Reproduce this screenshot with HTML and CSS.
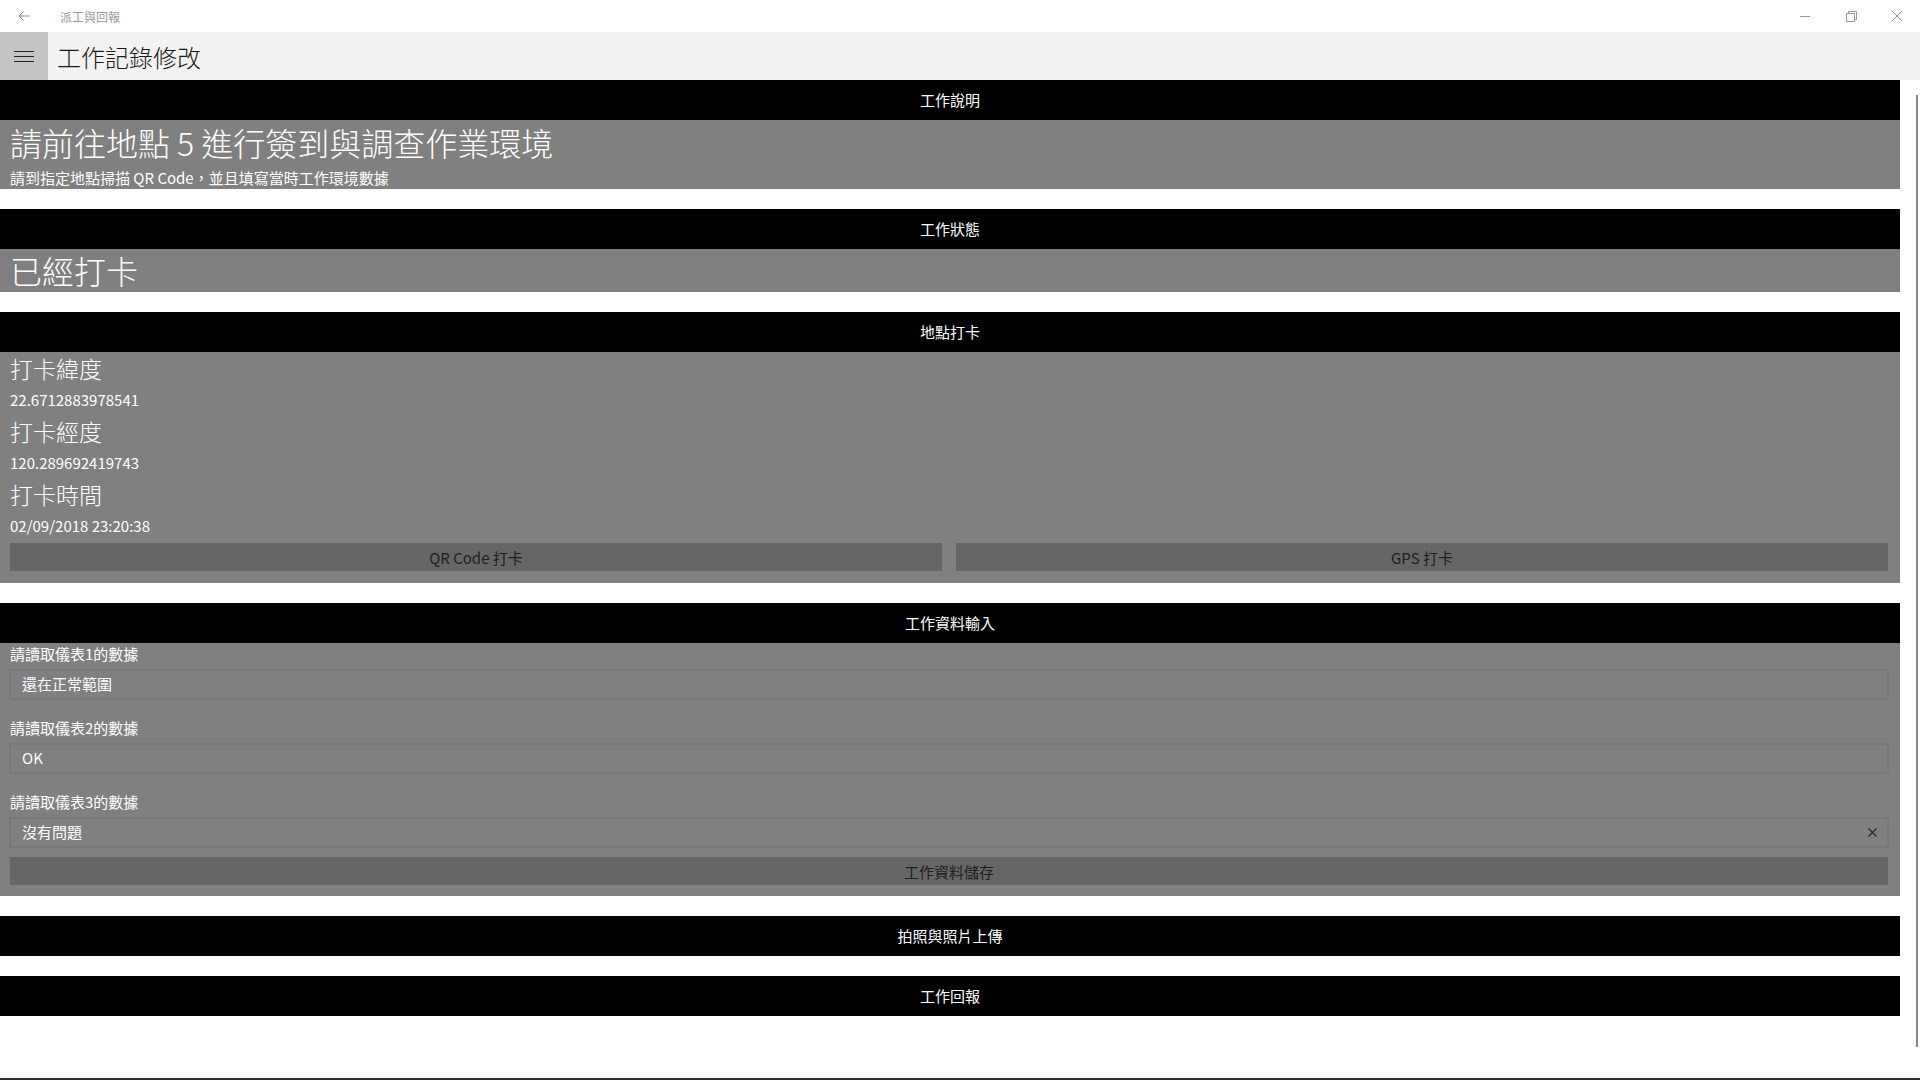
FILE: index.html
```html
<!DOCTYPE html>
<html lang="zh-Hant">
<head>
    <meta charset="UTF-8">
    <title>派工與回報</title>
    <link rel="stylesheet" href="styles.css">
</head>
<body>

<div class="titlebar">
    <svg class="back" width="12" height="10" viewBox="0 0 12 10"><path d="M5.5 0.5 L1 5 L5.5 9.5 M1 5 H12" fill="none" stroke="#8a8a8a" stroke-width="1"/></svg>
    <span class="app-name">派工與回報</span>
    <div class="win-controls">
        <svg width="46" height="32" viewBox="0 0 46 32"><path d="M18 16.5 H28" stroke="#999" stroke-width="1"/></svg>
        <svg width="46" height="32" viewBox="0 0 46 32"><path d="M18.5 13.5 H26.5 V21.5 H18.5 Z M20.5 13.5 V11.5 H28.5 V19.5 H26.5" fill="none" stroke="#999" stroke-width="1"/></svg>
        <svg width="46" height="32" viewBox="0 0 46 32"><path d="M18 11 L28 21 M28 11 L18 21" stroke="#999" stroke-width="1"/></svg>
    </div>
</div>

<div class="appbar">
    <div class="hamburger">
        <svg width="20" height="12" viewBox="0 0 20 12"><path d="M0 0.5 H20 M0 5.5 H20 M0 10.5 H20" stroke="#222" stroke-width="1"/></svg>
    </div>
    <h1 class="page-title">工作記錄修改</h1>
</div>

<div class="content">
    <div class="main">

        <div class="section">
            <div class="section-header">工作說明</div>
            <div class="section-body">
                <div class="big-text first">請前往地點 5 進行簽到與調查作業環境</div>
                <div class="sub-text">請到指定地點掃描 QR Code，並且填寫當時工作環境數據</div>
            </div>
        </div>

        <div class="section">
            <div class="section-header">工作狀態</div>
            <div class="section-body">
                <div class="big-text">已經打卡</div>
            </div>
        </div>

        <div class="section">
            <div class="section-header">地點打卡</div>
            <div class="section-body checkin">
                <div class="field-title">打卡緯度</div>
                <div class="field-value">22.6712883978541</div>
                <div class="field-title">打卡經度</div>
                <div class="field-value">120.289692419743</div>
                <div class="field-title">打卡時間</div>
                <div class="field-value">02/09/2018 23:20:38</div>
                <div class="btn-row">
                    <button class="btn">QR Code 打卡</button>
                    <button class="btn">GPS 打卡</button>
                </div>
            </div>
        </div>

        <div class="section">
            <div class="section-header">工作資料輸入</div>
            <div class="section-body inputs">
                <label class="input-label">請讀取儀表1的數據</label>
                <div class="textbox">還在正常範圍</div>
                <label class="input-label">請讀取儀表2的數據</label>
                <div class="textbox">OK</div>
                <label class="input-label">請讀取儀表3的數據</label>
                <div class="textbox">沒有問題
                    <svg class="clear" width="9" height="9" viewBox="0 0 9 9"><path d="M0.5 0.5 L8.5 8.5 M8.5 0.5 L0.5 8.5" stroke="#2a2a2a" stroke-width="1.2"/></svg>
                </div>
                <button class="btn save-btn">工作資料儲存</button>
            </div>
        </div>

        <div class="section">
            <div class="section-header">拍照與照片上傳</div>
        </div>

        <div class="section">
            <div class="section-header">工作回報</div>
        </div>

    </div>
    <div class="scroll-col"><div class="scroll-thumb"></div></div>
</div>

<div class="bottom-line"></div>

</body>
</html>
```

FILE: styles.css
```css
body { margin: 0; font-family: "Noto Sans CJK TC", "Noto Sans", sans-serif; background: #fff; overflow: hidden; height: 1080px; }

.titlebar { height: 32px; display: flex; align-items: center; position: relative; }
.back { margin-left: 18px; }
.app-name { margin-left: 30px; font-size: 12px; color: #999; }
.win-controls { margin-left: auto; display: flex; }
.win-controls svg { display: block; }

.appbar { height: 48px; background: #f2f2f2; display: flex; align-items: center; }
.hamburger { width: 48px; height: 48px; background: #c4c4c4; display: flex; align-items: center; justify-content: center; padding-top: 2px; box-sizing: border-box; }
.page-title { margin: 0 0 0 9px; font-size: 24px; font-weight: 300; color: #1a1a1a; }

.content { display: flex; height: 998px; }
.main { width: 1900px; }
.scroll-col { width: 20px; }
.scroll-thumb { width: 2px; height: 952px; margin: 15px 0 0 16px; background: #868686; }

.section { margin-bottom: 20px; }
.section-header { height: 40px; line-height: 40px; background: #000; color: #fff; text-align: center; font-size: 15px; }
.section-body { background: #808080; color: #fff; padding: 0 11px 0 10px; }

.big-text { font-size: 32px; font-weight: 300; line-height: 43px; }
.big-text.first { line-height: 44px; }
.sub-text { font-size: 15px; line-height: 22px; padding-top: 3px; }

.checkin { padding-bottom: 12px; }
.field-title { font-size: 23px; font-weight: 300; line-height: 32px; }
.field-value { font-size: 15px; line-height: 31px; }

.btn { display: block; border: none; background: #666; color: #1e1e1e; font-family: inherit; font-size: 15px; height: 28px; padding: 0; }
.btn-row { display: grid; grid-template-columns: 1fr 1fr; gap: 14px; margin: 2px 1px 0 0; }

.inputs { padding-left: 9px; padding-bottom: 11px; }
.input-label { display: block; font-size: 15px; line-height: 22px; margin-top: 17px; padding-left: 1px; }
.input-label:first-child { margin-top: 0; }
.textbox { position: relative; margin-top: 4px; height: 31px; box-sizing: border-box; border: 2px solid #787878; padding-left: 11px; line-height: 26px; font-size: 15px; }
.clear { position: absolute; right: 10px; top: 9px; }
.save-btn { width: calc(100% - 2px); margin: 9px 1px 0; }

.bottom-line { height: 2px; background: #2b2b2b; }
```
